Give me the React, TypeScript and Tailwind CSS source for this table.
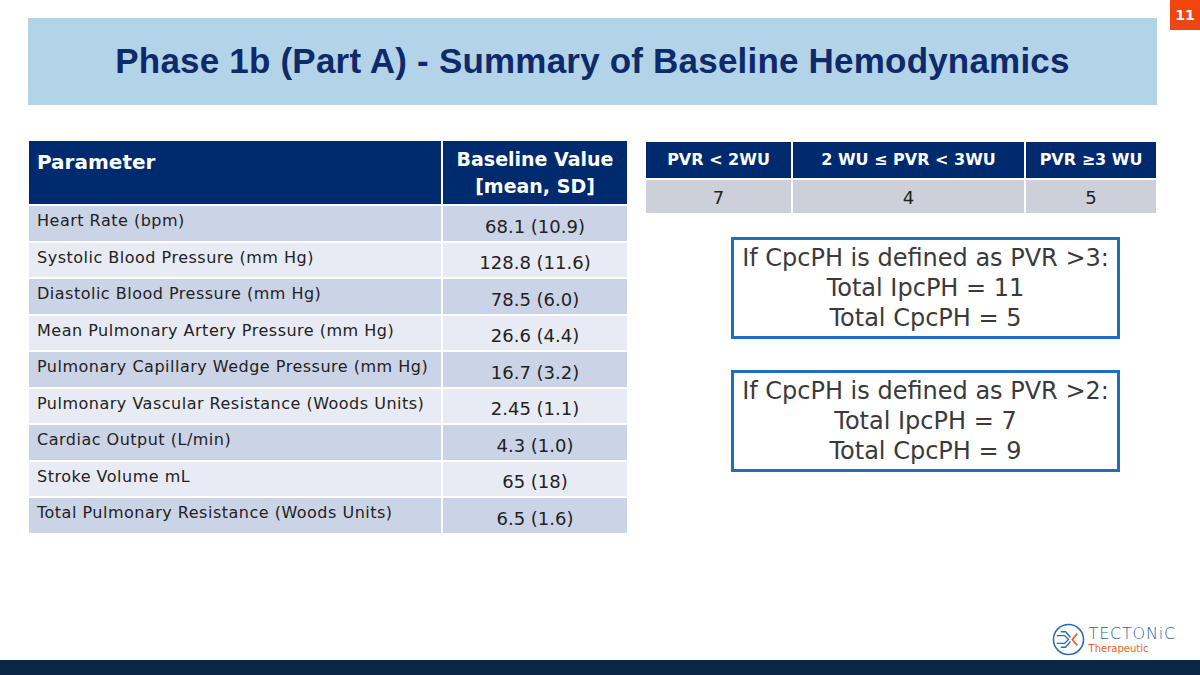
import React from "react";

const rows: [string, string][] = [
  ["Heart Rate (bpm)", "68.1 (10.9)"],
  ["Systolic Blood Pressure (mm Hg)", "128.8 (11.6)"],
  ["Diastolic Blood Pressure (mm Hg)", "78.5 (6.0)"],
  ["Mean Pulmonary Artery Pressure (mm Hg)", "26.6 (4.4)"],
  ["Pulmonary Capillary Wedge Pressure (mm Hg)", "16.7 (3.2)"],
  ["Pulmonary Vascular Resistance (Woods Units)", "2.45 (1.1)"],
  ["Cardiac Output (L/min)", "4.3 (1.0)"],
  ["Stroke Volume mL", "65 (18)"],
  ["Total Pulmonary Resistance (Woods Units)", "6.5 (1.6)"],
];

function Logo() {
  return (
    <div className="flex items-center gap-[4px]">
      <svg width="33" height="33" viewBox="0 0 34 34">
        <circle cx="17" cy="17" r="15.5" fill="none" stroke="#2a6db5" strokeWidth="1.6" />
        <path d="M5 13 L13 13 L17 17 L13 21 L5 21" fill="none" stroke="#2a6db5" strokeWidth="1.4" />
        <path d="M9 9 L14 9 L19 15" fill="none" stroke="#2a6db5" strokeWidth="1.4" />
        <path d="M9 25 L14 25 L19 19" fill="none" stroke="#2a6db5" strokeWidth="1.4" />
        <path d="M26 11 L21 17 L26 23" fill="none" stroke="#e8642c" strokeWidth="1.8" />
      </svg>
      <div className="flex flex-col leading-none">
        <span className="text-[16px] tracking-[0.8px] text-[#2f5f9e]" style={{ fontFamily: '"DejaVu Sans", sans-serif', fontWeight: 300 }}>
          TECTONiC
        </span>
        <span className="mt-[2px] text-[10px] text-[#e8642c]" style={{ fontFamily: '"DejaVu Sans", sans-serif' }}>
          Therapeutic
        </span>
      </div>
    </div>
  );
}

export default function App() {
  return (
    <div
      className="relative flex h-[675px] w-[1200px] flex-col overflow-hidden bg-white"
      style={{ fontFamily: '"DejaVu Sans", "Liberation Sans", sans-serif' }}
    >
      <div className="absolute right-0 top-0 flex h-[30px] w-[30px] items-center justify-center bg-[#f0460e] text-[14px] font-bold text-white">
        11
      </div>

      <div className="ml-[28px] mt-[18px] flex h-[87px] w-[1129px] items-center justify-center bg-[#b3d3e8]">
        <h1
          className="text-[35px] font-bold tracking-[0.2px] text-[#0e2a6a]"
          style={{ fontFamily: '"Liberation Sans", sans-serif' }}
        >
          Phase 1b (Part A) - Summary of Baseline Hemodynamics
        </h1>
      </div>

      <div className="mt-[36px] flex">
        <div className="ml-[29px] w-[598px]">
          <div className="grid grid-cols-[414px_184px]">
            <div className="flex h-[63px] items-start border-r-2 border-white bg-[#002a6e] pl-[8px] pt-[6px] text-[20px] font-bold text-white">
              Parameter
            </div>
            <div className="flex h-[63px] flex-col items-center justify-center bg-[#002a6e] text-[19px] font-bold leading-[27px] text-white">
              <span>Baseline Value</span>
              <span>[mean, SD]</span>
            </div>
            {rows.map(([label, value], i) => {
              const bg = i % 2 === 0 ? "bg-[#cbd4e7]" : "bg-[#e8ebf4]";
              return (
                <React.Fragment key={label}>
                  <div className={`h-[36.5px] border-r-2 border-t-2 border-white pl-[8px] pt-[3px] text-[16px] tracking-[0.5px] text-[#222] ${bg}`}>
                    {label}
                  </div>
                  <div className={`flex h-[36.5px] items-center justify-center border-t-2 border-white pt-[6px] text-[18px] text-[#222] ${bg}`}>
                    {value}
                  </div>
                </React.Fragment>
              );
            })}
          </div>
        </div>

        <div className="ml-[19px] w-[510px]">
          <div className="mt-[1px] grid grid-cols-[147px_233px_130px]">
            <div className="flex h-[36px] items-center justify-center border-r-2 border-white bg-[#002a6e] text-[16px] font-bold text-white">
              PVR &lt; 2WU
            </div>
            <div className="flex h-[36px] items-center justify-center border-r-2 border-white bg-[#002a6e] text-[16px] font-bold text-white">
              2 WU ≤ PVR &lt; 3WU
            </div>
            <div className="flex h-[36px] items-center justify-center bg-[#002a6e] text-[16px] font-bold text-white">
              PVR ≥3 WU
            </div>
            <div className="flex h-[35px] items-center justify-center border-r-2 border-t-2 border-white bg-[#cdd0d8] pt-[2px] text-[18px] text-[#222]">
              7
            </div>
            <div className="flex h-[35px] items-center justify-center border-r-2 border-t-2 border-white bg-[#cdd0d8] pt-[2px] text-[18px] text-[#222]">
              4
            </div>
            <div className="flex h-[35px] items-center justify-center border-t-2 border-white bg-[#cdd0d8] pt-[2px] text-[18px] text-[#222]">
              5
            </div>
          </div>

          <div className="ml-[85px] mt-[24px] flex h-[102px] w-[389px] flex-col items-center justify-center border-[3px] border-[#1f6ebf] text-[24px] leading-[30px] text-[#3a3a3a]">
            <span>If CpcPH is defined as PVR &gt;3:</span>
            <span>Total IpcPH = 11</span>
            <span>Total CpcPH = 5</span>
          </div>

          <div className="ml-[85px] mt-[31px] flex h-[102px] w-[389px] flex-col items-center justify-center border-[3px] border-[#1f6ebf] text-[24px] leading-[30px] text-[#3a3a3a]">
            <span>If CpcPH is defined as PVR &gt;2:</span>
            <span>Total IpcPH = 7</span>
            <span>Total CpcPH = 9</span>
          </div>
        </div>
      </div>

      <div className="mt-auto flex justify-end pb-[4px] pr-[24px]">
        <Logo />
      </div>
      <div className="h-[15px] w-full bg-[#0a2748]" />
    </div>
  );
}
